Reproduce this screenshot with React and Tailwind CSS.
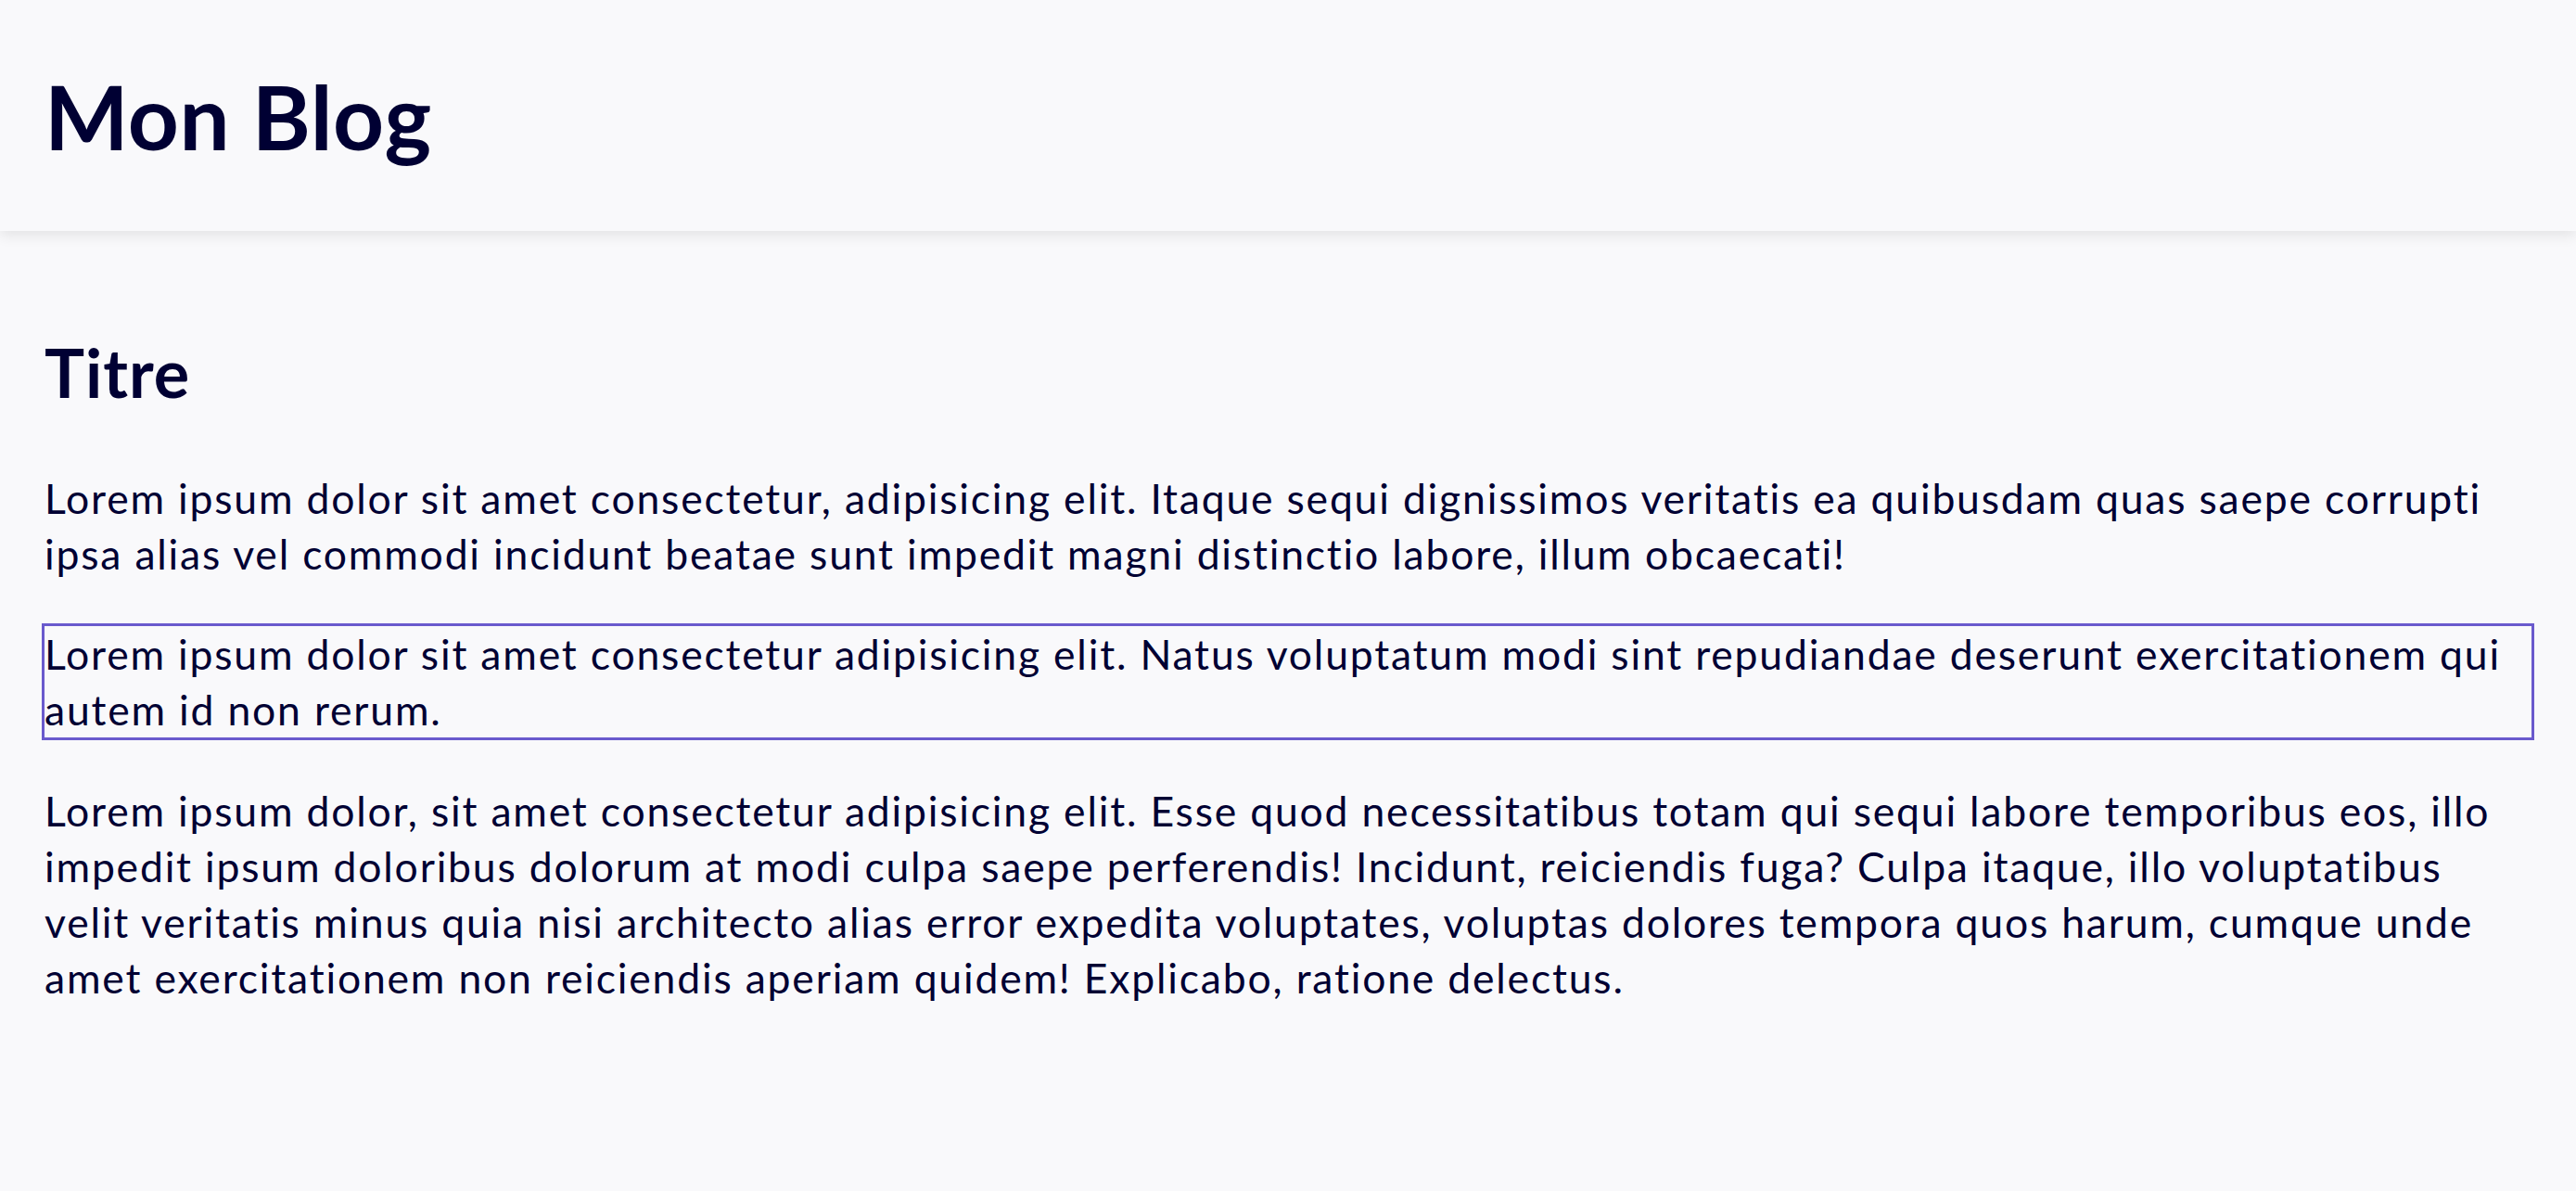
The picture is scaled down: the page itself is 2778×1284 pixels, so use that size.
export default function App() {
  const font = { fontFamily: 'Lato, "Noto Sans", sans-serif' };
  return (
    <div className="min-h-screen bg-[#f9f9fb] text-[#000033] [font-variant-ligatures:none]" style={font}>
      <header className="h-[249px] flex items-center px-[48px] bg-[#f9f9fb] shadow-[0_5px_14px_rgba(0,0,0,0.09)]">
        <h1 className="text-[96px] leading-none font-bold tracking-[0.5px]">Mon Blog</h1>
      </header>
      <main className="px-[45px] pt-[116px] pb-[100px]">
        <h2 className="pl-[3px] text-[72px] leading-none font-bold tracking-[1px]">Titre</h2>
        <p className="mt-[70px] pl-[3px] text-[44.5px] leading-[60px] tracking-[1.8px] whitespace-nowrap">
          Lorem ipsum dolor sit amet consectetur, adipisicing elit. Itaque sequi dignissimos veritatis ea quibusdam quas saepe corrupti
          <br />
          ipsa alias vel commodi incidunt beatae sunt impedit magni distinctio labore, illum obcaecati!
        </p>
        <p className="mt-[45px] border-[3px] border-[#6a5acd] text-[44.5px] leading-[60px] tracking-[1.8px] whitespace-nowrap">
          Lorem ipsum dolor sit amet consectetur adipisicing elit. Natus voluptatum modi sint repudiandae deserunt exercitationem qui
          <br />
          autem id non rerum.
        </p>
        <p className="mt-[46px] pl-[3px] text-[44.5px] leading-[60px] tracking-[1.8px] whitespace-nowrap">
          Lorem ipsum dolor, sit amet consectetur adipisicing elit. Esse quod necessitatibus totam qui sequi labore temporibus eos, illo
          <br />
          impedit ipsum doloribus dolorum at modi culpa saepe perferendis! Incidunt, reiciendis fuga? Culpa itaque, illo voluptatibus
          <br />
          velit veritatis minus quia nisi architecto alias error expedita voluptates, voluptas dolores tempora quos harum, cumque unde
          <br />
          amet exercitationem non reiciendis aperiam quidem! Explicabo, ratione delectus.
        </p>
      </main>
    </div>
  );
}
